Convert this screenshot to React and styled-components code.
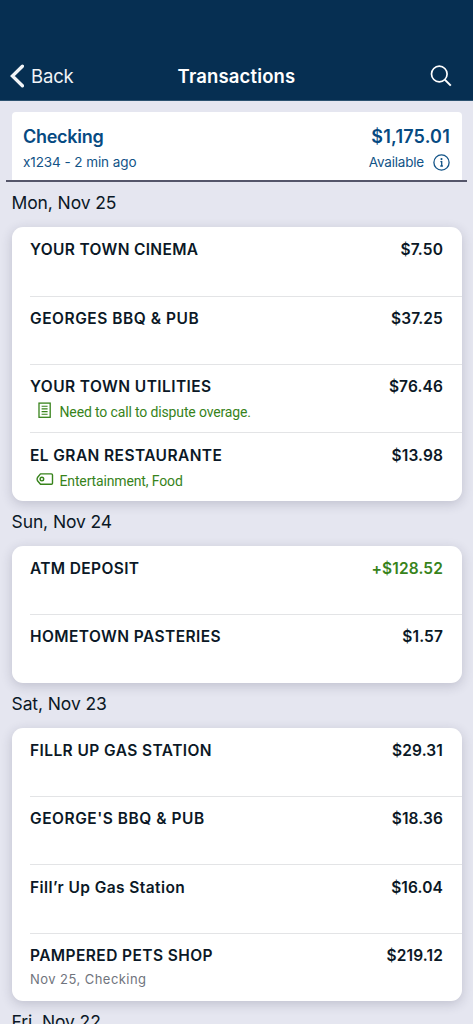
import React from 'react';
import styled, { createGlobalStyle } from 'styled-components';

const GlobalStyle = createGlobalStyle`
  *, *::before, *::after { box-sizing: border-box; }
  html, body { margin: 0; height: 100%; overflow: hidden; }
  body {
    background: #e5e6f0;
    color: #0b1826;
    font-family: Inter, "Liberation Sans", sans-serif;
    -webkit-font-smoothing: antialiased;
  }
`;

const Screen = styled.div`
  width: 100%;
  height: 100vh;
  overflow: hidden;
  display: flex;
  flex-direction: column;
  background: #e5e6f0;
`;

const Header = styled.header`
  flex: none;
  height: 101px;
  padding: 51px 10px 0;
  display: grid;
  grid-template-columns: 1fr auto 1fr;
  align-items: center;
  background: #062f52;
  border-bottom: 1px solid #2c5270;
  color: #fff;
`;

const BackButton = styled.button`
  display: flex;
  align-items: center;
  gap: 7px;
  padding: 0;
  border: 0;
  background: none;
  color: #f1f4f7;
  font: 400 18.5px/24px Inter, sans-serif;
  letter-spacing: -0.15px;
`;

const Title = styled.h1`
  margin: 0;
  font-size: 18.5px;
  line-height: 24px;
  font-weight: 600;
  letter-spacing: 0.15px;
`;

const SearchButton = styled.button`
  justify-self: end;
  display: flex;
  margin-right: 11px;
  padding: 0;
  border: 0;
  background: none;
  color: #fff;
`;

const Account = styled.section`
  flex: none;
  margin: 11px 6px 0;
  padding: 0 5.5px;
  border-bottom: 2px solid #55566a;
`;

const AccountCard = styled.div`
  height: 68px;
  padding: 11px 11.5px 0;
  border-radius: 4px 4px 0 0;
  background: #fff;
  color: #125387;
`;

const AccountLine = styled.div`
  display: flex;
  justify-content: space-between;
  align-items: center;
  height: 26px;
  font-size: 18px;
  font-weight: 600;
  color: #064a82;
`;

const AccountName = styled.span`
  letter-spacing: -0.28px;
`;

const AccountBalance = styled.span`
  letter-spacing: 0.2px;
`;

const AccountMeta = styled.div`
  display: flex;
  justify-content: space-between;
  align-items: center;
  height: 26px;
  font-size: 13.5px;
  letter-spacing: -0.08px;
`;

const Available = styled.span`
  display: flex;
  align-items: center;
  gap: 9px;
  letter-spacing: -0.2px;
`;

const DateHeading = styled.h2`
  flex: none;
  margin: 0;
  height: 45.12px;
  padding: 9px 0 0 11.5px;
  font-size: 17.5px;
  line-height: 24px;
  font-weight: 400;
  letter-spacing: -0.1px;
`;

const Card = styled.section`
  flex: none;
  margin: 0 11.5px;
  border-radius: 11px;
  background: #fff;
  box-shadow: 0 3px 12px rgba(40, 40, 70, 0.2);
`;

const Row = styled.div`
  height: 68.4px;
  margin-left: 18.5px;
  padding: 12.28px 18.5px 0 0;
  border-top: 1px solid ${(p) => (p.$divided ? '#e3e4e6' : 'transparent')};
`;

const RowMain = styled.div`
  display: flex;
  justify-content: space-between;
  font-size: 15.5px;
  line-height: 20px;
  font-weight: 600;
`;

const Payee = styled.span`
  letter-spacing: ${(p) => p.$spacing ?? 0.42}px;
`;

const Amount = styled.span`
  letter-spacing: 0.12px;
  color: ${(p) => (p.$credit ? '#37831b' : 'inherit')};
`;

const Note = styled.div`
  display: flex;
  align-items: center;
  gap: 5.5px;
  padding-left: 6px;
  margin-top: 5px;
  height: 20px;
  color: #37831b;
  font: 400 14px/20px Roboto, sans-serif;
  letter-spacing: -0.14px;
`;

const NoteIcon = styled.span`
  flex: none;
  display: flex;
  width: 18px;
  height: 20px;
  margin-top: -2px;
`;

const Posted = styled.div`
  margin-top: 3px;
  color: #70747d;
  font-size: 13px;
  line-height: 20px;
  letter-spacing: 0.45px;
`;

const ChevronIcon = () => (
  <svg width="14" height="24" viewBox="0 0 14 24" fill="none" stroke="currentColor" strokeWidth="3.3" strokeLinecap="round" strokeLinejoin="miter">
    <path d="M12.4 2.2 L2.4 12 L12.4 21.8" />
  </svg>
);

const SearchIcon = () => (
  <svg width="22" height="22" viewBox="0 0 22 22" fill="none" stroke="currentColor" strokeWidth="1.7">
    <circle cx="9.3" cy="9" r="7.8" />
    <path d="M14.8 14.6 L20.8 20.6" strokeWidth="2" />
  </svg>
);

const InfoIcon = () => (
  <svg width="17" height="17" viewBox="0 0 17 17" fill="none" stroke="currentColor" strokeWidth="1.3">
    <circle cx="8.5" cy="8.5" r="7.6" />
    <circle cx="8.5" cy="5.1" r="1.05" fill="currentColor" stroke="none" />
    <path d="M7.4 7.6h1.3v4.3M7.3 12h2.6" />
  </svg>
);

const MemoIcon = () => (
  <svg width="18" height="20" viewBox="0 0 18 20" fill="none" stroke="currentColor" strokeWidth="1.3">
    <rect x="3" y="2.1" width="11.2" height="14.2" />
    <path d="M5.6 5.2h6M5.6 7.9h6M5.6 10.6h6M5.6 13.3h6" strokeWidth="1.1" />
  </svg>
);

const TagIcon = () => (
  <svg width="18" height="20" viewBox="0 0 18 20" fill="none" stroke="currentColor" strokeWidth="1.4" strokeLinejoin="round">
    <path d="M4.5 3.9h10.9q1.1 0 1.1 1.1v8.2q0 1.1-1.1 1.1H4.5L1.5 10.7q-.8-1.6 0-3.2Z" />
    <circle cx="5.9" cy="9.1" r="1.8" />
  </svg>
);

const groups = [
  {
    date: 'Mon, Nov 25',
    items: [
      { payee: 'YOUR TOWN CINEMA', amount: '$7.50', spacing: 0.33 },
      { payee: 'GEORGES BBQ & PUB', amount: '$37.25', spacing: 0.53 },
      { payee: 'YOUR TOWN UTILITIES', amount: '$76.46', note: 'Need to call to dispute overage.', Icon: MemoIcon },
      { payee: 'EL GRAN RESTAURANTE', amount: '$13.98', note: 'Entertainment, Food', Icon: TagIcon },
    ],
  },
  {
    date: 'Sun, Nov 24',
    items: [
      { payee: 'ATM DEPOSIT', amount: '+$128.52', credit: true, spacing: 0.36 },
      { payee: 'HOMETOWN PASTERIES', amount: '$1.57' },
    ],
  },
  {
    date: 'Sat, Nov 23',
    items: [
      { payee: 'FILLR UP GAS STATION', amount: '$29.31' },
      { payee: "GEORGE'S BBQ & PUB", amount: '$18.36', spacing: 0.53 },
      { payee: 'Fill’r Up Gas Station', amount: '$16.04' },
      { payee: 'PAMPERED PETS SHOP', amount: '$219.12', posted: 'Nov 25, Checking' },
    ],
  },
];

export default function App() {
  return (
    <Screen>
      <GlobalStyle />
      <Header>
        <BackButton><ChevronIcon />Back</BackButton>
        <Title>Transactions</Title>
        <SearchButton aria-label="Search"><SearchIcon /></SearchButton>
      </Header>
      <Account>
        <AccountCard>
          <AccountLine>
            <AccountName>Checking</AccountName>
            <AccountBalance>$1,175.01</AccountBalance>
          </AccountLine>
          <AccountMeta>
            <span>x1234 - 2 min ago</span>
            <Available>Available<InfoIcon /></Available>
          </AccountMeta>
        </AccountCard>
      </Account>
      {groups.map((group) => (
        <React.Fragment key={group.date}>
          <DateHeading>{group.date}</DateHeading>
          <Card>
            {group.items.map(({ payee, amount, credit, spacing, note, Icon, posted }, i) => (
              <Row key={payee} $divided={i > 0}>
                <RowMain>
                  <Payee $spacing={spacing}>{payee}</Payee>
                  <Amount $credit={credit}>{amount}</Amount>
                </RowMain>
                {note && <Note><NoteIcon><Icon /></NoteIcon>{note}</Note>}
                {posted && <Posted>{posted}</Posted>}
              </Row>
            ))}
          </Card>
        </React.Fragment>
      ))}
      <DateHeading>Fri, Nov 22</DateHeading>
    </Screen>
  );
}
